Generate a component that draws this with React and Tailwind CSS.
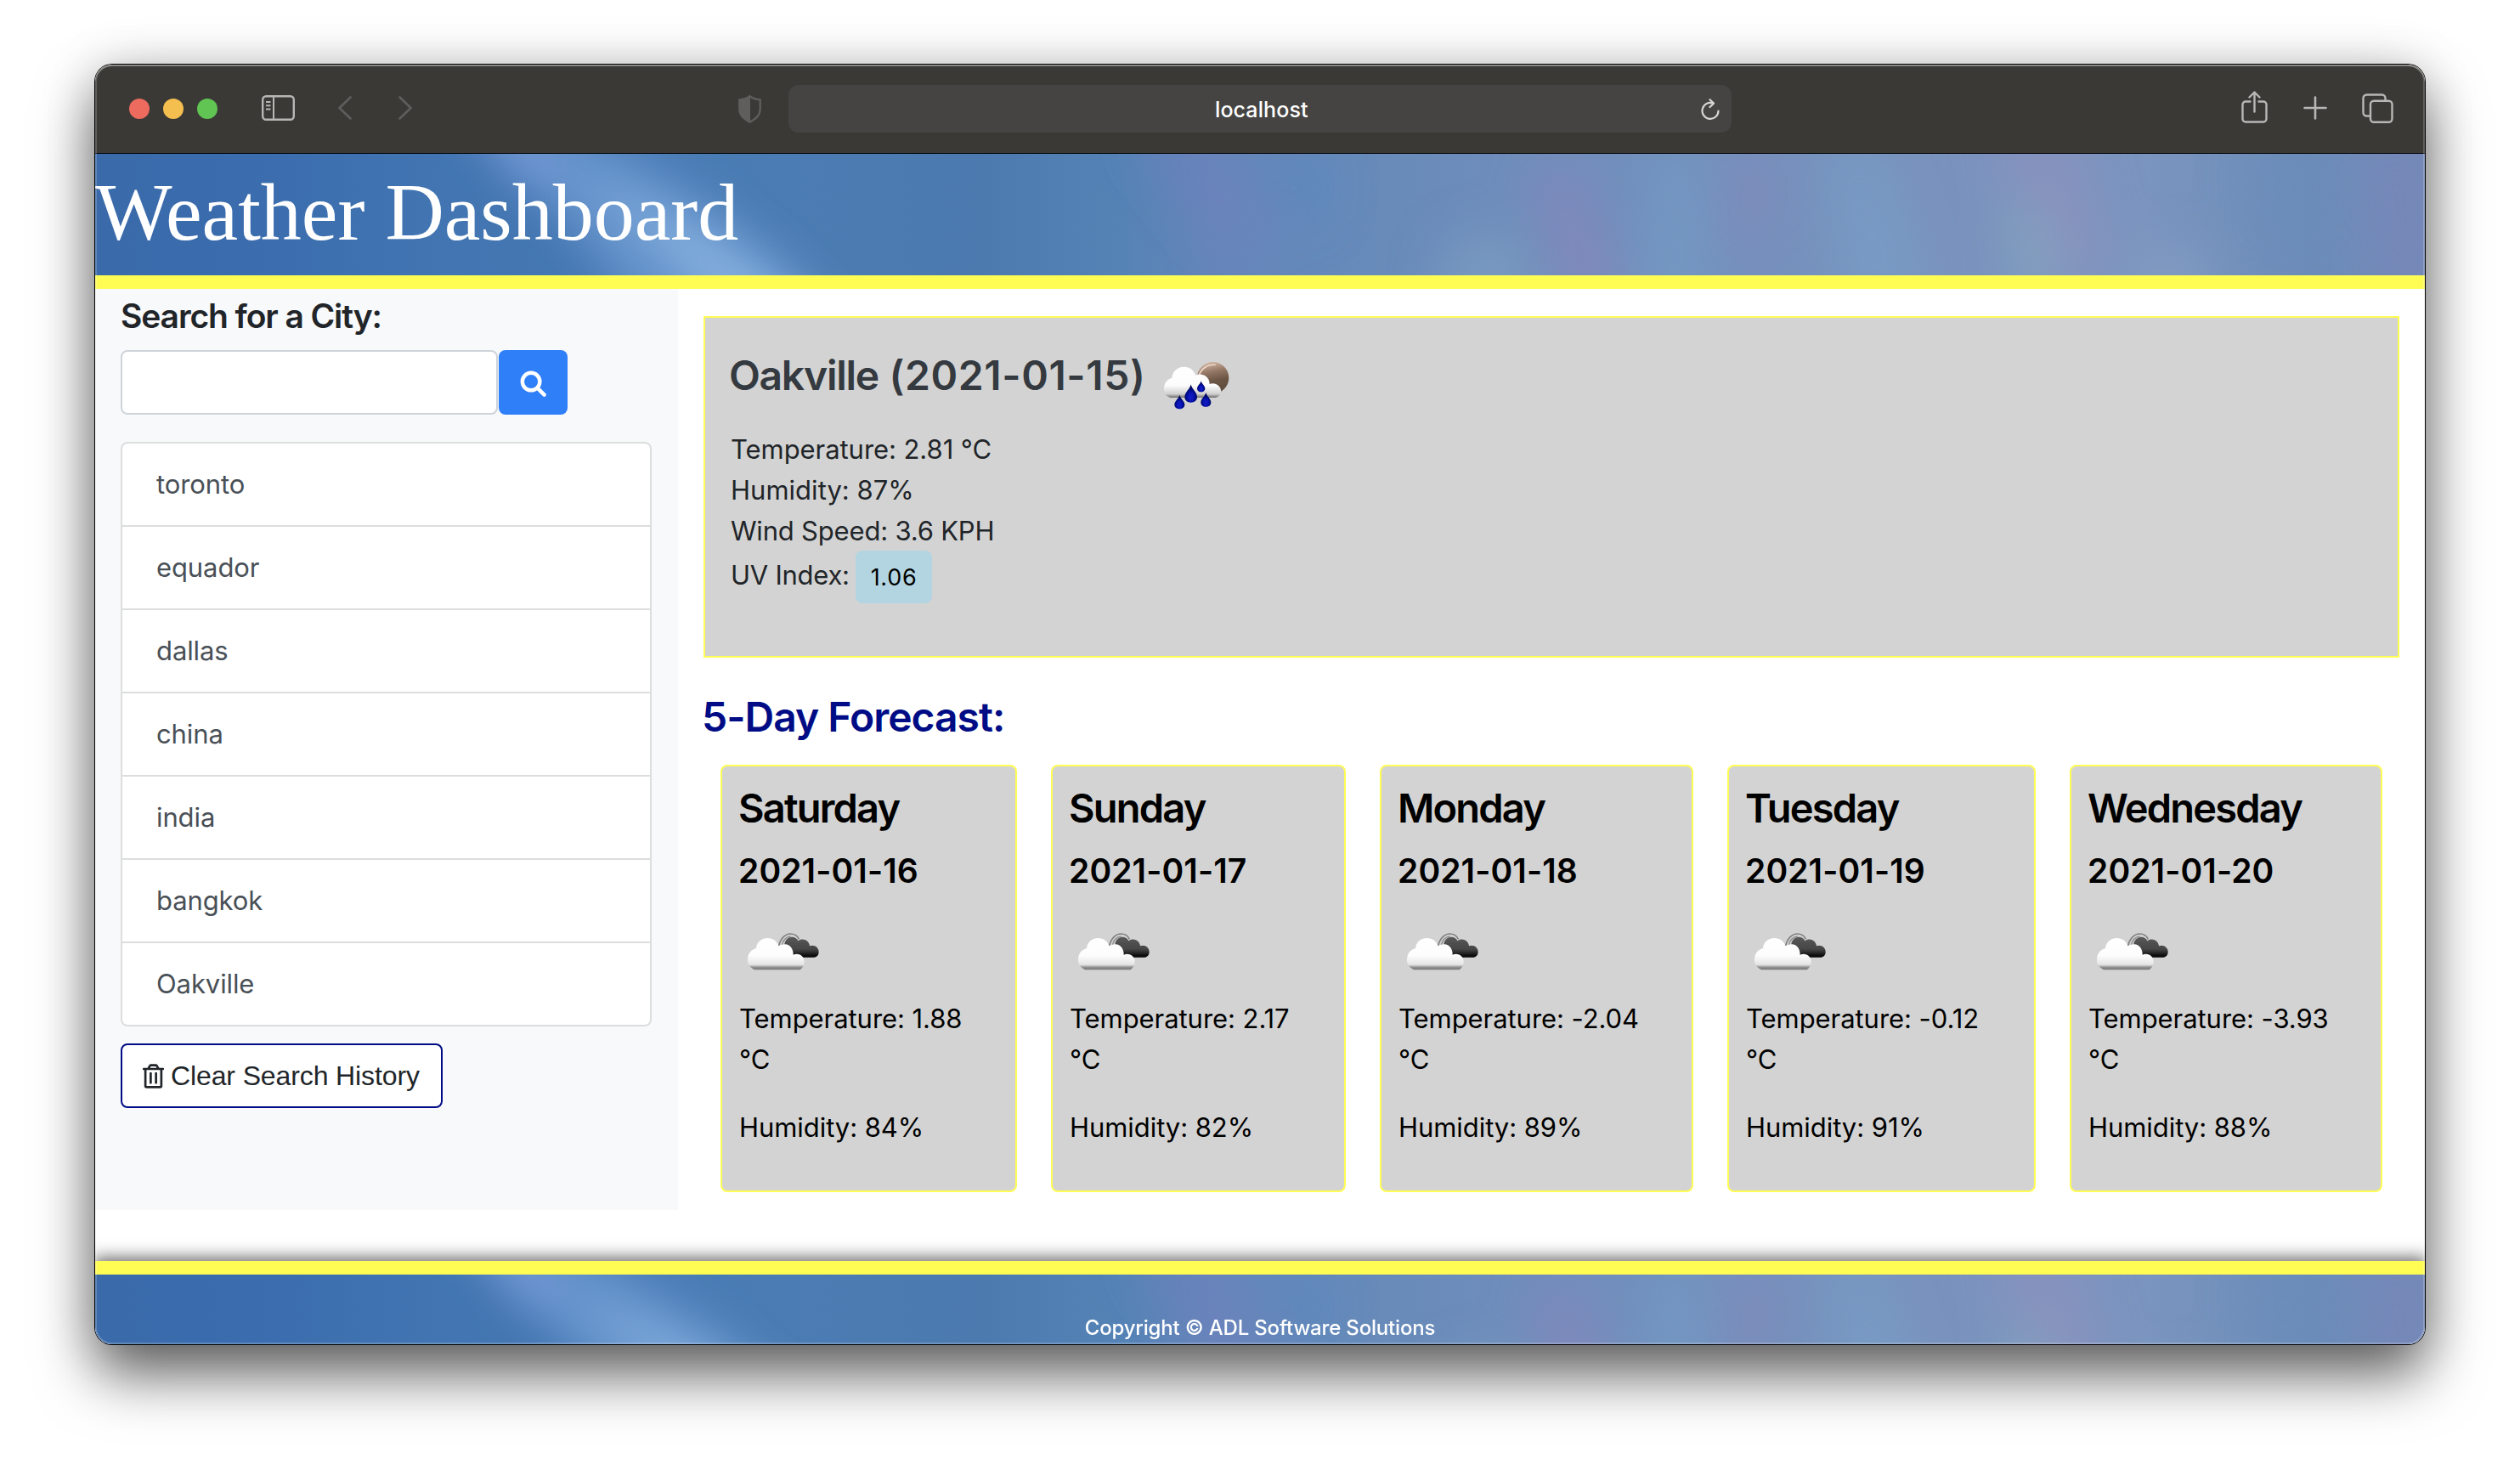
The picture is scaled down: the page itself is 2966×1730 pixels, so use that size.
import React, { useId } from "react";
import { FaRegTrashAlt } from "react-icons/fa";

const cities = ["toronto", "equador", "dallas", "china", "india", "bangkok", "Oakville"];

const forecast = [
  { day: "Saturday", date: "2021-01-16", temp: "1.88", humidity: 84, width: "w-[349px]" },
  { day: "Sunday", date: "2021-01-17", temp: "2.17", humidity: 82, width: "w-[347px]" },
  { day: "Monday", date: "2021-01-18", temp: "-2.04", humidity: 89, width: "w-[369px]" },
  { day: "Tuesday", date: "2021-01-19", temp: "-0.12", humidity: 91, width: "w-[363px]" },
  { day: "Wednesday", date: "2021-01-20", temp: "-3.93", humidity: 88, width: "w-[368px]" },
];

/* Soft blue sky with a diagonal light beam, used behind the header and footer. */
function Sky() {
  const id = useId();
  return (
    <svg className="absolute inset-0 h-[144px] w-full" viewBox="0 0 2742 144" preserveAspectRatio="none" aria-hidden="true">
      <defs>
        <linearGradient id={id + "base"} x1="0" x2="1" y1="0" y2="0">
          <stop offset="0" stopColor="#3a6aa9" />
          <stop offset="0.06" stopColor="#3a6cae" />
          <stop offset="0.14" stopColor="#4174b1" />
          <stop offset="0.27" stopColor="#4a7cb4" />
          <stop offset="0.38" stopColor="#4c7aaf" />
          <stop offset="0.44" stopColor="#5583b6" />
          <stop offset="0.48" stopColor="#6586ba" />
          <stop offset="0.53" stopColor="#658aba" />
          <stop offset="0.6" stopColor="#6e8dbb" />
          <stop offset="0.7" stopColor="#7490bd" />
          <stop offset="0.8" stopColor="#7a93be" />
          <stop offset="0.88" stopColor="#7a95bf" />
          <stop offset="0.95" stopColor="#6c8cb9" />
          <stop offset="1" stopColor="#748bb9" />
        </linearGradient>
        <filter id={id + "soft"} x="-50%" y="-50%" width="200%" height="200%">
          <feGaussianBlur stdDeviation="30" />
        </filter>
        <filter id={id + "beam"} x="-50%" y="-50%" width="200%" height="200%">
          <feGaussianBlur stdDeviation="24" />
        </filter>
      </defs>
      <rect width="2742" height="144" fill={`url(#${id}base)`} />
      <g filter={`url(#${id}beam)`}>
        <path d="M390 -80 L480 -80 C620 -10 790 80 900 220 L660 220 C590 110 510 30 390 -80Z" fill="#6c9ad2" opacity="0.75" />
        <path d="M560 30 C670 60 790 120 870 220 L760 220 C700 140 640 80 560 30Z" fill="#8bb5e2" opacity="0.8" />
        <path d="M420 -60 L490 -60 L570 40 L500 40Z" fill="#7a9bd8" opacity="0.6" />
      </g>
      <g filter={`url(#${id}soft)`}>
        <path d="M1220 -30 L1290 -30 L1390 90 L1330 110 Z" fill="#7480c0" opacity="0.5" />
        <path d="M1380 0 L1450 10 L1440 80 L1400 70 Z" fill="#4f84c0" opacity="0.4" />
        <path d="M1590 110 L1660 90 L1700 190 L1580 190 Z" fill="#85aac6" opacity="0.5" />
        <path d="M1690 10 L1750 30 L1800 180 L1730 180 Z" fill="#9184bb" opacity="0.55" />
        <path d="M1840 -20 L1880 -10 L1900 180 L1820 180 Z" fill="#74a3cb" opacity="0.45" />
        <path d="M1920 0 L1980 0 L1970 90 L1930 140 Z" fill="#8a86b8" opacity="0.45" />
        <path d="M2040 -20 L2100 0 L2160 180 L2060 180 Z" fill="#78a5cc" opacity="0.5" />
        <path d="M2230 -30 L2330 -30 L2370 130 L2310 170 Z" fill="#9490bd" opacity="0.55" />
        <path d="M2255 60 L2285 60 L2310 170 L2270 170 Z" fill="#86b0bd" opacity="0.7" />
        <path d="M2400 120 L2480 110 L2500 190 L2400 190 Z" fill="#8ea6c6" opacity="0.5" />
        <path d="M2530 -10 L2620 -10 L2610 100 L2550 100 Z" fill="#668bb8" opacity="0.4" />
        <path d="M2680 -20 L2730 -20 L2742 170 L2690 170 Z" fill="#7c80b7" opacity="0.4" />
      </g>
    </svg>
  );
}

function CloudsIcon() {
  const id = useId();
  return (
    <svg className="h-20 w-[120px]" viewBox="0 0 360 240" aria-hidden="true">
      <defs>
        <linearGradient id={id + "f"} x1="0" x2="0" y1="0" y2="1">
          <stop offset="0" stopColor="#fff" />
          <stop offset="0.55" stopColor="#fdfdfd" />
          <stop offset="0.84" stopColor="#e4e4e4" />
          <stop offset="0.92" stopColor="#909090" />
          <stop offset="1" stopColor="#757575" />
        </linearGradient>
        <linearGradient id={id + "b"} x1="0" x2="0" y1="0" y2="1">
          <stop offset="0" stopColor="#585858" />
          <stop offset="0.6" stopColor="#464646" />
          <stop offset="1" stopColor="#000" />
        </linearGradient>
        <filter id={id + "blur"}>
          <feGaussianBlur stdDeviation="2.2" />
        </filter>
      </defs>
      <g filter={`url(#${id}blur)`}>
        <path d="M170 100 C176 72 194 57 211 57 C226 57 236 64 241 76" fill="none" stroke="#808080" strokeWidth="5" />
        <path d="M180 100 C184 80 196 68 212 66" fill="none" stroke="#8c8c8c" strokeWidth="4" />
        <path d="M190 100 C188 66 228 58 238 82 C254 70 277 80 279 100 C296 94 312 106 311 122 C310 134 302 140 290 140 L230 140 L205 120Z" fill={`url(#${id}b)`} />
        <path d="M85 184 C65 176 58 160 60 145 C62 122 76 112 90 108 C92 84 112 72 130 72 C150 72 164 83 169 100 C175 96 185 94 192 94 C210 94 222 112 221 131 C232 126 246 129 254 138 C264 150 262 172 245 184Z" fill={`url(#${id}f)`} />
      </g>
    </svg>
  );
}

function Drop({ x, y, w, h, fill }) {
  return (
    <g transform={`translate(${x} ${y}) scale(${w / 40} ${h / 60})`}>
      <path d="M20 0 C23 16 40 26 40 42 C40 53 31 60 20 60 C9 60 0 53 0 42 C0 26 17 16 20 0Z" fill={fill} />
    </g>
  );
}

function NightRainIcon() {
  const id = useId();
  const drop = `url(#${id}d)`;
  return (
    <svg className="h-[90px] w-[120px] shrink-0" viewBox="0 0 360 270" aria-hidden="true">
      <defs>
        <linearGradient id={id + "c"} x1="0" x2="0" y1="0" y2="1">
          <stop offset="0" stopColor="#fff" />
          <stop offset="0.6" stopColor="#fcfcfc" />
          <stop offset="0.88" stopColor="#d0d0d0" />
          <stop offset="1" stopColor="#6c6c6c" />
        </linearGradient>
        <linearGradient id={id + "m"} x1="0.4" x2="0.6" y1="0" y2="1">
          <stop offset="0" stopColor="#d3b7a3" />
          <stop offset="0.3" stopColor="#957866" />
          <stop offset="0.6" stopColor="#6b5545" />
          <stop offset="1" stopColor="#5d4b3e" />
        </linearGradient>
        <radialGradient id={id + "d"} cx="0.5" cy="0.7" r="0.5">
          <stop offset="0" stopColor="#0f1fcb" />
          <stop offset="0.6" stopColor="#0510a8" />
          <stop offset="1" stopColor="#02065c" />
        </radialGradient>
        <filter id={id + "blur"}>
          <feGaussianBlur stdDeviation="1.8" />
        </filter>
      </defs>
      <g filter={`url(#${id}blur)`}>
        <circle cx="233" cy="104" r="56" fill={`url(#${id}m)`} />
        <path d="M183 98 C190 72 212 56 242 58" fill="none" stroke="#ecd8ca" strokeWidth="5" />
        <path d="M82 174 C64 167 58 152 60 137 C62 117 76 108 88 104 C90 79 110 65 131 65 C151 65 166 77 171 95 C177 92 185 91 192 92 C210 94 222 110 221 126 C234 121 248 126 256 136 C267 150 260 170 243 174Z" fill={`url(#${id}c)`} />
        <Drop x={133} y={127} w={44} h={64} fill={drop} />
        <Drop x={177} y={115} w={28} h={39} fill={drop} />
        <Drop x={97} y={164} w={36} h={50} fill={drop} />
        <Drop x={190} y={156} w={36} h={50} fill={drop} />
      </g>
    </svg>
  );
}

function Toolbar() {
  return (
    <div className="flex h-[104px] shrink-0 items-center bg-[#3a3936] pl-10">
      <div className="flex gap-4">
        <span className="size-6 rounded-full bg-[#ed6a5e]" />
        <span className="size-6 rounded-full bg-[#f5bf4f]" />
        <span className="size-6 rounded-full bg-[#61c554]" />
      </div>
      <svg className="mb-0.5 ml-[52px] h-[30px] w-[39px]" viewBox="0 0 39 30" fill="none" stroke="#b8b7b5" strokeWidth="2.4">
        <rect x="1.2" y="1.2" width="36.6" height="27.6" rx="4" />
        <path d="M14 1v28M5 8h5.5M5 12.3h5.5M5 16.6h5.5" strokeWidth="2" />
      </svg>
      <svg className="mb-0.5 ml-[51px] h-7 w-4" viewBox="0 0 16 28" fill="none" stroke="#5f5e5c" strokeWidth="2.6" strokeLinecap="round" strokeLinejoin="round">
        <path d="M14.5 1.5 1.5 14l13 12.500" />
      </svg>
      <svg className="mb-0.5 ml-[55px] h-7 w-4" viewBox="0 0 16 28" fill="none" stroke="#5f5e5c" strokeWidth="2.6" strokeLinecap="round" strokeLinejoin="round">
        <path d="M1.5 1.5 14.5 14l-13 12.500" />
      </svg>
      <svg className="ml-[384px] h-[33px] w-[27px]" viewBox="0 0 27 33" fill="none">
        <path d="M13.500 1.300C17 4 21 5 25.700 5.500V17c0 7-5 11-12.200 14.600C6.300 28 1.300 24 1.300 17V5.500C6 5 10 4 13.500 1.300Z" stroke="#5f5e5c" strokeWidth="2.4" />
        <path d="M14 1.300V31.600C6.300 28 1.300 24 1.300 17V5.500C6 5 10 4 14 1.300Z" fill="#5f5e5c" />
      </svg>
      <div className="ml-8 flex h-14 w-[1110px] items-center rounded-xl bg-[#454442] pr-3.5 pl-[502px]">
        <span className="pt-0.5 text-[25px] leading-[30px] font-medium tracking-[0.1px] text-white">localhost</span>
        <svg className="mt-0.5 ml-auto h-[26px] w-[22px]" viewBox="0 0 22 26" fill="none" stroke="#d6d5d4" strokeWidth="2.2" strokeLinecap="round" strokeLinejoin="round">
          <path d="M20.500 14.500A9.500 9.500 0 1 1 14 5.400" />
          <path d="M10.500 1.200 15 5.600 10.500 10" />
        </svg>
      </div>
      <svg className="mb-1 ml-[600px] h-[38px] w-[31px]" viewBox="0 0 31 38" fill="none" stroke="#b8b7b5" strokeWidth="2.4" strokeLinecap="round" strokeLinejoin="round">
        <path d="M10.500 12.500H5a3.500 3.500 0 0 0-3.500 3.500v17A3.500 3.500 0 0 0 5 36.500h21a3.500 3.500 0 0 0 3.500-3.500V16a3.500 3.500 0 0 0-3.500-3.500h-5.500M15.500 24.500V1.500M9.500 7.500l6-6 6 6" />
      </svg>
      <svg className="mb-0.5 ml-[42px] h-[28px] w-[28px]" viewBox="0 0 28 28" fill="none" stroke="#b8b7b5" strokeWidth="2.6" strokeLinecap="round">
        <path d="M14 1.500v25M1.500 14h25" />
      </svg>
      <svg className="mb-0.5 ml-[41px] h-[35px] w-[37px]" viewBox="0 0 37 35" fill="none" stroke="#b8b7b5" strokeWidth="2.4" strokeLinejoin="round">
        <rect x="10" y="8.8" width="25.5" height="25" rx="4" />
        <path d="M9.800 26.500H5.500a4 4 0 0 1-4-4V5.500a4 4 0 0 1 4-4h18a4 4 0 0 1 4 4v3" />
      </svg>
    </div>
  );
}

function Sidebar() {
  return (
    <aside className="h-[1084px] w-[686px] bg-[#f8f9fb] pt-2 pr-[31px] pl-[30px]">
      <h5 className="text-[39px] leading-[48px] font-semibold tracking-[-1.1px] text-[#212529]">Search for a City:</h5>
      <div className="mt-4 flex gap-px">
        <input aria-label="City" className="h-[76px] w-[444px] rounded-lg border-2 border-[#ced4da] bg-white" />
        <button aria-label="Search" className="flex h-[76px] w-[81px] items-center justify-center rounded-lg bg-[#2f7ff8]">
          <svg className="mt-0.5 h-[31px] w-[31px]" viewBox="0 0 32 32" fill="none" stroke="#fff" strokeWidth="4.6" strokeLinecap="round">
            <circle cx="13.5" cy="13.5" r="10.6" />
            <path d="m21.500 21.500 8 8" />
          </svg>
        </button>
      </div>
      <ul className="mt-8 divide-y-2 divide-[#dcdddd] overflow-hidden rounded-lg border-2 border-[#dcdddd] bg-white">
        {cities.map((city, i) => (
          <li key={city} className={i === cities.length - 1 ? "flex h-24 items-center pl-10" : "flex h-[98px] items-center pl-10"}>
            <span className="text-[31px] leading-[48px] tracking-[-0.1px] text-[#495057]">{city}</span>
          </li>
        ))}
      </ul>
      <button className="mt-5 flex h-[76px] w-[379px] items-center rounded-lg border-2 border-[#000c85] bg-white pl-6 text-[#212529]">
        <FaRegTrashAlt className="h-[29px] w-[25px]" />
        <span className="ml-2 font-['Liberation_Sans',sans-serif] text-[32px] leading-[48px] tracking-[-0.12px] whitespace-nowrap">Clear Search History</span>
      </button>
    </aside>
  );
}

function CurrentWeather() {
  return (
    <section className="h-[402px] border-2 border-[#fffd54] bg-[#d3d3d3] pt-9 pl-[30px] text-[31px] leading-[48px] text-[#212529]">
      <div className="flex h-[90px] items-start">
        <h3 className="mt-[3px] -ml-0.5 w-[492px] text-[48px] leading-[58px] font-semibold tracking-[0.6px] whitespace-nowrap text-[#343a40]">
          <span className="tracking-[-1.3px]">Oakville</span> (2021-01-15)
        </h3>
        <NightRainIcon />
      </div>
      <p className="mt-[5px] tracking-[-0.06px]">Temperature: 2.81 °C</p>
      <p className="tracking-[0.02px]">Humidity: 87%</p>
      <p className="tracking-[-0.19px]">Wind Speed: 3.6 KPH</p>
      <p className="-mt-px flex">
        <span className="w-[147px] leading-[57px] tracking-[-0.25px]">UV Index:</span>
        <span className="h-[62px] w-[90px] rounded-lg bg-[#b3d5e1] pt-px text-center text-[27px] leading-[62px] tracking-[0.7px] text-black">1.06</span>
      </p>
    </section>
  );
}

function DayCard({ day, date, temp, humidity, width }) {
  return (
    <article className={`${width} h-[503px] rounded-lg border-2 border-[#fffd54] bg-[#d3d3d3] pt-5 pl-5 text-[31px] leading-[48px] tracking-[-0.06px] text-black`}>
      <h4 className="-ml-px text-[47px] leading-[58px] font-semibold tracking-[-1.8px]">{day}</h4>
      <h5 className="mt-[21px] -ml-px text-[39px] leading-[48px] font-semibold tracking-[0.1px]">{date}</h5>
      <div className="mt-[31px] -ml-2.5 h-20">
        <CloudsIcon />
      </div>
      <p className="mt-[15px]">
        Temperature: {temp}
        <br />
        °C
      </p>
      <p className="mt-8">Humidity: {humidity}%</p>
    </article>
  );
}

export default function App() {
  return (
    <div className="h-[1730px] w-[2966px] overflow-hidden bg-white pt-[76px] pl-[112px] font-['Inter',sans-serif]">
      <div className="relative flex h-[1506px] w-[2742px] rounded-[20px] shadow-[0_0_0_1px_#000,0_36px_68px_rgba(0,0,0,0.6),0_0_60px_rgba(0,0,0,0.16)]">
        <div className="flex w-full flex-col overflow-hidden rounded-[20px] bg-white">
          <Toolbar />
          <header className="relative h-[144px] shrink-0 overflow-hidden border-t border-black">
            <Sky />
            <h1 className="relative pt-[11px] font-['Liberation_Serif',serif] text-[96px] leading-[115px] whitespace-nowrap text-white">Weather Dashboard</h1>
          </header>
          <div className="h-4 shrink-0 bg-[#fffd54]" />
          <div className="flex h-[1144px] shrink-0">
            <Sidebar />
            <main className="grow px-[30px] pt-8">
              <CurrentWeather />
              <h2 className="mt-[41px] -ml-0.5 text-[48px] leading-[58px] font-semibold tracking-[-1px] text-[#000c85]">5-Day Forecast:</h2>
              <div className="mt-[27px] ml-5 flex gap-10">
                {forecast.map((f) => (
                  <DayCard key={f.day} {...f} />
                ))}
              </div>
            </main>
          </div>
          <div className="relative h-4 shrink-0 bg-[#fffd54] shadow-[0_0_20px_3px_rgba(0,0,0,0.65)]" />
          <footer className="relative grow overflow-hidden">
            <Sky />
            <p className="relative pt-12 text-center text-[24px] leading-[30px] font-medium tracking-[-0.18px] text-white">Copyright © ADL Software Solutions</p>
          </footer>
        </div>
        <div className="pointer-events-none absolute inset-0 rounded-[20px] shadow-[inset_0_2px_0_rgba(255,255,255,0.25),inset_0_0_0_2px_rgba(255,255,255,0.2)]" />
      </div>
    </div>
  );
}
